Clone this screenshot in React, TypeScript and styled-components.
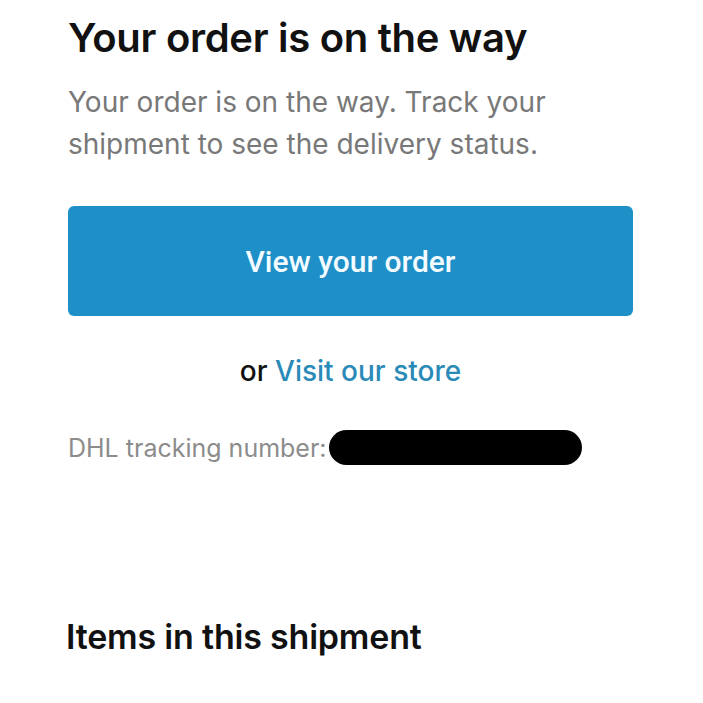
import React from 'react'
import styled, { createGlobalStyle } from 'styled-components'

const GlobalStyle = createGlobalStyle`
  html, body {
    margin: 0;
    padding: 0;
    background: #ffffff;
  }
  body {
    font-family: Inter, "Noto Sans", "Liberation Sans", sans-serif;
    -webkit-font-smoothing: antialiased;
  }
`

const Page = styled.div`
  width: 703px;
  height: 703px;
  box-sizing: border-box;
  padding: 14px 70px 0 68px;
  display: flex;
  flex-direction: column;
  overflow: hidden;
`

const Title = styled.h1`
  margin: 0;
  font-size: 40px;
  line-height: 48px;
  font-weight: 600;
  color: #111111;
  letter-spacing: -0.3px;
`

const Lead = styled.p`
  margin: 19px 0 0;
  font-size: 28px;
  line-height: 42px;
  color: #787878;
  font-weight: 400;
  max-width: 500px;
`

const PrimaryButton = styled.button`
  margin-top: 41px;
  width: 565px;
  height: 110px;
  border: none;
  border-radius: 6px;
  background: #1f8fc7;
  color: #f2fbff;
  font-family: Roboto, "Liberation Sans", sans-serif;
  font-size: 30px;
  font-weight: 500;
  cursor: pointer;
`

const AltRow = styled.p`
  margin: 37px 0 0;
  width: 565px;
  text-align: center;
  font-size: 28px;
  line-height: 36px;
  font-weight: 500;
  color: #111111;
`

const StoreLink = styled.a`
  color: #2a8ab8;
  text-decoration: none;
  font-weight: 500;
`

const Tracking = styled.div`
  margin-top: 41px;
  display: flex;
  align-items: center;
  font-size: 25px;
  color: #8c8c8c;
`

// blacked-out tracking code
const Redacted = styled.span`
  display: inline-block;
  width: 253px;
  height: 35px;
  margin-left: 2px;
  background: #000000;
  border-radius: 18px;
`

const Subtitle = styled.h2`
  margin: 150px 0 0 -2px;
  font-size: 34px;
  line-height: 44px;
  font-weight: 600;
  color: #111111;
  letter-spacing: -0.2px;
`

export default function App() {
  return (
    <>
      <GlobalStyle />
      <Page>
        <Title>Your order is on the way</Title>
        <Lead>Your order is on the way. Track your shipment to see the delivery status.</Lead>
        <PrimaryButton>View your order</PrimaryButton>
        <AltRow>
          or <StoreLink href="#">Visit our store</StoreLink>
        </AltRow>
        <Tracking>
          DHL tracking number:<Redacted />
        </Tracking>
        <Subtitle>Items in this shipment</Subtitle>
      </Page>
    </>
  )
}
